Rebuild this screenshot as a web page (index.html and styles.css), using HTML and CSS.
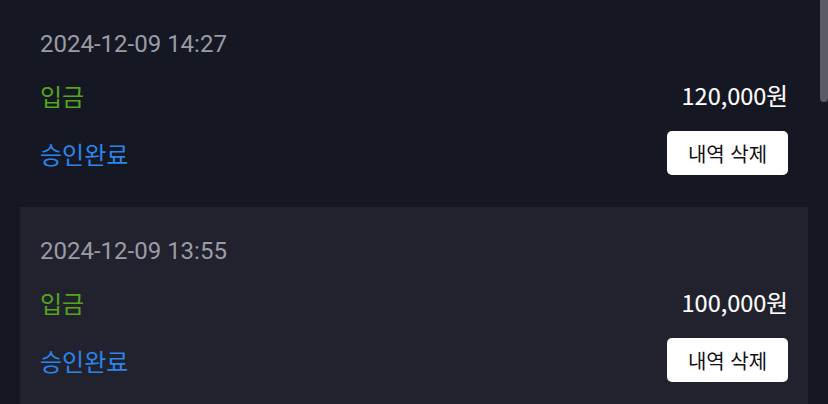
FILE: index.html
```html
<!DOCTYPE html>
<html lang="ko">
<head>
<meta charset="utf-8">
<title>입출금 내역</title>
<link rel="stylesheet" href="styles.css">
</head>
<body>
<div class="list">
  <div class="card">
    <div class="date">2024-12-09 14:27</div>
    <div class="row">
      <span class="type">입금</span>
      <span class="amount">120,000원</span>
    </div>
    <div class="row">
      <span class="status">승인완료</span>
      <button class="del">내역 삭제</button>
    </div>
  </div>
  <div class="card alt">
    <div class="date">2024-12-09 13:55</div>
    <div class="row">
      <span class="type">입금</span>
      <span class="amount">100,000원</span>
    </div>
    <div class="row">
      <span class="status">승인완료</span>
      <button class="del">내역 삭제</button>
    </div>
  </div>
</div>
<div class="thumb"></div>
</body>
</html>
```

FILE: styles.css
```css
html, body {
  margin: 0;
  padding: 0;
  background: #151722;
  overflow: hidden;
}
.list {
  display: flex;
  flex-direction: column;
  padding: 0 20px;
}
.card {
  display: flex;
  flex-direction: column;
  gap: 14px;
  padding: 30px 20px 32px;
}
.card.alt {
  background: #21222e;
}
.date {
  font-family: Roboto, "Noto Sans", sans-serif;
  font-size: 24px;
  line-height: 29px;
  color: #9b9ba5;
}
.row {
  display: flex;
  align-items: center;
  justify-content: space-between;
  height: 44px;
}
.type, .status {
  font-family: "Noto Sans CJK KR", "Noto Sans", sans-serif;
  font-size: 24px;
}
.type { color: #55a51c; }
.status { color: #2b85ea; }
.amount {
  font-family: "Noto Sans CJK KR", "Noto Sans", sans-serif;
  font-size: 23.5px;
  font-weight: 400;
  -webkit-text-stroke: 0.12px #ffffff;
  color: #ffffff;
}
.del {
  height: 44px;
  width: 121px;
  border: none;
  border-radius: 5px;
  background: #ffffff;
  color: #111111;
  font-family: "Noto Sans CJK KR", "Noto Sans", sans-serif;
  font-size: 20px;
  padding: 0;
}
.thumb {
  position: fixed;
  top: -6px;
  right: 0;
  width: 8px;
  height: 108px;
  border-radius: 4px;
  background: #5b5b66;
}
```
